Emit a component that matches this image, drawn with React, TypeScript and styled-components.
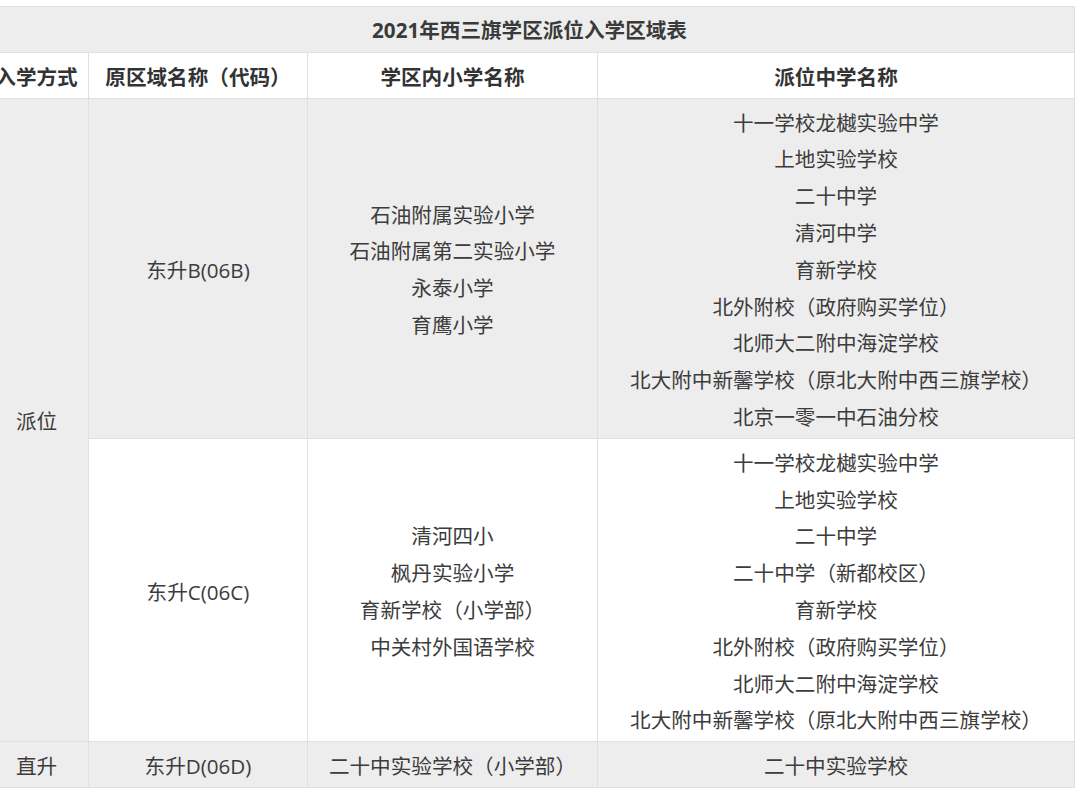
import React from "react";
import styled, { createGlobalStyle } from "styled-components";

const Global = createGlobalStyle`
  html, body { margin: 0; padding: 0; background: #ffffff; overflow: hidden; }
  body { font-family: "Open Sans", "Noto Sans CJK SC", sans-serif; }
`;

const Page = styled.div`
  width: 1080px;
  height: 796px;
  padding-top: 6px;
  box-sizing: border-box;
  overflow: hidden;
`;

const Table = styled.table`
  margin-left: -16px;
  width: 1090px;
  border-collapse: collapse;
  table-layout: fixed;
  color: #3c3c3c;
  font-size: 20.6px;
  line-height: 36.8px;
`;

const Row = styled.tr<{ $shade?: boolean }>`
  background: ${(p) => (p.$shade ? "#ededed" : "#ffffff")};
`;

const Cell = styled.td<{ $shade?: boolean }>`
  border: 1px solid #e0e0e0;
  padding: 6px 4px 2px;
  text-align: center;
  vertical-align: middle;
  white-space: nowrap;
  ${(p) => (p.$shade ? "background: #ededed;" : "")}
`;

const HeadCell = styled.th<{ $title?: boolean }>`
  border: 1px solid #e0e0e0;
  padding: ${(p) => (p.$title ? "5px 4px 3px" : "6px 4px 2px")};
  text-align: center;
  vertical-align: middle;
  font-weight: 700;
  color: ${(p) => (p.$title ? "#3a3a3a" : "#333333")};
  white-space: nowrap;
`;

const Line = styled.div`
  display: block;
`;

const Lines = ({ items }: { items: string[] }) => (
  <>
    {items.map((t, i) => (
      <Line key={i}>{t}</Line>
    ))}
  </>
);

const bMiddle = [
  "十一学校龙樾实验中学",
  "上地实验学校",
  "二十中学",
  "清河中学",
  "育新学校",
  "北外附校（政府购买学位）",
  "北师大二附中海淀学校",
  "北大附中新馨学校（原北大附中西三旗学校）",
  "北京一零一中石油分校",
];

const cMiddle = [
  "十一学校龙樾实验中学",
  "上地实验学校",
  "二十中学",
  "二十中学（新都校区）",
  "育新学校",
  "北外附校（政府购买学位）",
  "北师大二附中海淀学校",
  "北大附中新馨学校（原北大附中西三旗学校）",
];

export default function App() {
  return (
    <Page>
      <Global />
      <Table>
        <colgroup>
          <col style={{ width: 104 }} />
          <col style={{ width: 219 }} />
          <col style={{ width: 290 }} />
          <col style={{ width: 477 }} />
        </colgroup>
        <tbody>
          <Row $shade>
            <HeadCell colSpan={4} $title>
              2021年西三旗学区派位入学区域表
            </HeadCell>
          </Row>
          <Row>
            <HeadCell>入学方式</HeadCell>
            <HeadCell>原区域名称（代码）</HeadCell>
            <HeadCell>学区内小学名称</HeadCell>
            <HeadCell>派位中学名称</HeadCell>
          </Row>
          <Row $shade>
            <Cell rowSpan={2} $shade>
              派位
            </Cell>
            <Cell>东升B(06B)</Cell>
            <Cell>
              <Lines items={["石油附属实验小学", "石油附属第二实验小学", "永泰小学", "育鹰小学"]} />
            </Cell>
            <Cell>
              <Lines items={bMiddle} />
            </Cell>
          </Row>
          <Row>
            <Cell>东升C(06C)</Cell>
            <Cell>
              <Lines items={["清河四小", "枫丹实验小学", "育新学校（小学部）", "中关村外国语学校"]} />
            </Cell>
            <Cell>
              <Lines items={cMiddle} />
            </Cell>
          </Row>
          <Row $shade>
            <Cell>直升</Cell>
            <Cell>东升D(06D)</Cell>
            <Cell>二十中实验学校（小学部）</Cell>
            <Cell>二十中实验学校</Cell>
          </Row>
        </tbody>
      </Table>
    </Page>
  );
}
